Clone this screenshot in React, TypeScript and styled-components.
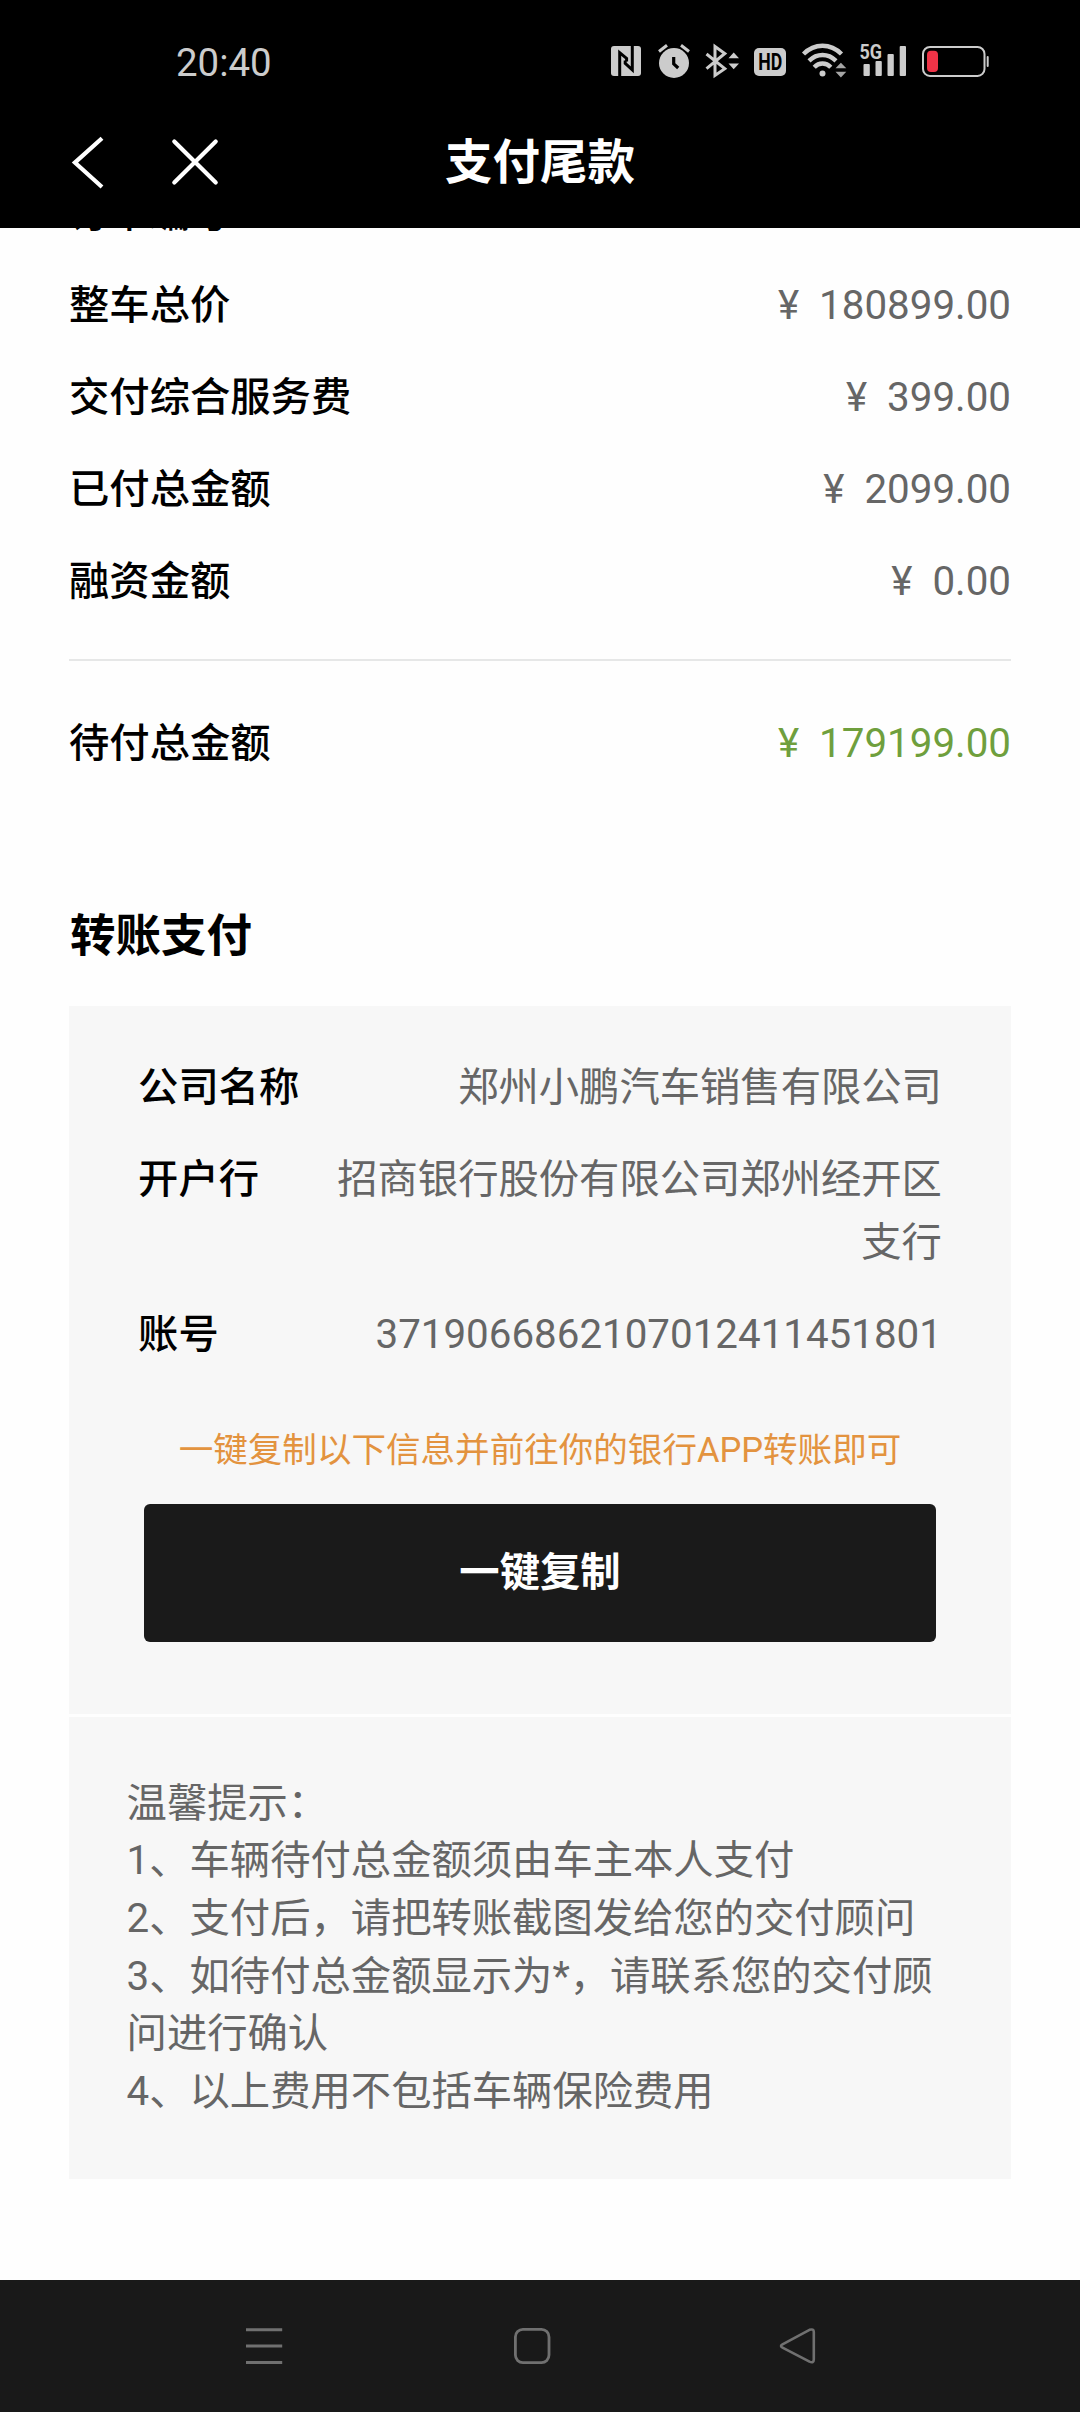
import React from "react";
import styled, { createGlobalStyle, css } from "styled-components";

const GlobalStyle = createGlobalStyle`
  * { box-sizing: border-box; }
  html, body { margin: 0; padding: 0; background: #fff; }
  body { font-family: Roboto, "Noto Sans CJK SC", sans-serif; color: #000; }
`;

const Screen = styled.div`
  width: 1080px;
  height: 2412px;
  display: flex;
  flex-direction: column;
  overflow: hidden;
  background: #fefefe;
`;

const Header = styled.header`
  flex: none;
  height: 228px;
  background: #000;
  color: #fff;
`;

const StatusBar = styled.div`
  height: 100px;
  padding: 22px 91px 0 176px;
  display: flex;
  justify-content: space-between;
  align-items: flex-start;
`;

const Clock = styled.time`
  font-size: 38.4px;
  line-height: 82px;
  color: #ccc;
`;

const StatusIcons = styled.div`
  display: flex;
  margin-top: 18px;
`;

const Glyph = styled.svg<{ $gap?: number }>`
  display: block;
  flex: none;
  overflow: visible;
  margin-left: ${(p) => p.$gap ?? 0}px;
`;

const TitleBar = styled.div`
  height: 128px;
  padding: 0 72px;
  display: grid;
  grid-template-columns: 1fr auto 1fr;
`;

const TitleActions = styled.div`
  display: flex;
  gap: 68px;
  padding-top: 37px;
`;

const Title = styled.h1`
  margin: 0;
  font-size: 47.5px;
  line-height: 126px;
  font-weight: 700;
`;

const Content = styled.main`
  flex: 1;
  min-height: 0;
  overflow: hidden;
  padding: 0 69px;
`;

const Fees = styled.section`
  margin-top: -46.4px;
`;

const Row = styled.div`
  display: flex;
  justify-content: space-between;
  font-size: 40.32px;
  line-height: 63.36px;
  & + & {
    margin-top: 28.8px;
  }
`;

const Label = styled.span`
  flex: none;
  font-weight: 500;
`;

const Value = styled.span<{ $accent?: boolean }>`
  color: #666;
  text-align: right;
  white-space: pre-wrap;
  ${(p) =>
    p.$accent &&
    css`
      color: #6f9f3d;
    `}
`;

const Divider = styled.hr`
  height: 2px;
  margin: 45px 0 51.5px;
  border: 0;
  background: #e6e7e7;
`;

const SectionTitle = styled.h2`
  margin: 128.7px 0 0;
  padding-left: 1px;
  font-size: 45.5px;
  line-height: 66px;
  font-weight: 700;
`;

const Card = styled.section`
  height: 708px;
  margin-top: 35.8px;
  padding: 49.7px 69.12px 0;
  background: #f7f7f7;
`;

const Hint = styled.p`
  margin: 55.3px 0 0;
  font-size: 34.56px;
  line-height: 56px;
  color: #e3933f;
  text-align: center;
  white-space: nowrap;
`;

const CopyButton = styled.button`
  display: block;
  width: 792px;
  height: 138px;
  margin: 26px auto 0;
  padding: 0;
  border: 0;
  border-radius: 6px;
  background: #1a1a1a;
  color: #fff;
  font: 700 40.32px/138px Roboto, "Noto Sans CJK SC", sans-serif;
`;

const Tips = styled.section`
  height: 462px;
  margin-top: 3px;
  padding: 57.8px 57.6px 0;
  background: #f7f7f7;
  color: #666;
  font-size: 40.32px;
  line-height: 57.6px;
`;

const Tip = styled.p`
  margin: 0;
`;

const NavBar = styled.nav`
  flex: none;
  height: 132px;
  padding: 46px 0 0 244px;
  display: flex;
  background: #191919;
`;

const INK = "#ccc";

const NfcIcon = () => (
  <Glyph width="30" height="38" viewBox="611 40 30 38">
    <rect x="611" y="46" width="30" height="30" rx="3" fill={INK} />
    <path
      d="M619.7 77V52.6L626.6 58.4V61.5M632.3 45V69.8L625.2 63.4V60.5"
      fill="none"
      stroke="#000"
      strokeWidth="3"
    />
  </Glyph>
);

const AlarmIcon = () => (
  <Glyph $gap={17} width="32" height="38" viewBox="658 40 32 38">
    <circle cx="674" cy="63" r="15" fill={INK} />
    <path d="M659 51.5L667 45.2M689 51.5L681 45.2" stroke={INK} strokeWidth="3" fill="none" />
    <path d="M673.7 57V63.8L678.2 68" stroke="#000" strokeWidth="3.2" fill="none" />
  </Glyph>
);

const BluetoothIcon = () => (
  <Glyph $gap={15} width="34" height="38" viewBox="705 40 34 38">
    <path
      d="M706.5 54L724.8 68.7L715 75.5V46.5L724.8 53.5L706.5 68.7"
      stroke={INK}
      strokeWidth="3"
      fill="none"
    />
    <path d="M728.5 58.3L733.7 52.4L739 58.3ZM728.5 63.4L733.7 69.2L739 63.4Z" fill={INK} />
  </Glyph>
);

const HdIcon = () => (
  <Glyph $gap={15} width="32" height="38" viewBox="754 40 32 38">
    <rect x="754" y="48" width="32" height="28" rx="5" fill={INK} />
    <text
      x="770.3"
      y="70.3"
      textAnchor="middle"
      textLength="24"
      lengthAdjust="spacingAndGlyphs"
      fontFamily="Roboto, sans-serif"
      fontWeight="700"
      fontSize="23"
      fill="#000"
    >
      HD
    </text>
  </Glyph>
);

const WifiIcon = () => (
  <Glyph $gap={16} width="44" height="38" viewBox="802 40 44 38">
    <circle cx="822.5" cy="73.5" r="3" fill={INK} />
    <path
      d="M803.5 54C814.5 43 830.5 43 841.5 54M809 60.8C817 53 828 53 836 60.8M814.2 67.3C819 62.3 826 62.3 830.8 67.3"
      stroke={INK}
      strokeWidth="4.4"
      fill="none"
    />
    <path d="M835.5 68.3L840.9 62.8L846.3 68.3ZM835.5 71.8L840.9 77.4L846.3 71.8Z" fill="#a5a5a5" />
  </Glyph>
);

const SignalIcon = () => (
  <Glyph $gap={13} width="47" height="38" viewBox="859 40 47 38">
    <g fill={INK}>
      <rect x="863.5" y="64" width="6.3" height="12" rx="1" />
      <rect x="875.5" y="61" width="6.3" height="15" rx="1" />
      <rect x="887.5" y="54" width="6.3" height="22" rx="1" />
      <rect x="899.7" y="46" width="6.3" height="30" rx="1" />
      <text
        x="859.5"
        y="58.8"
        textLength="22.5"
        lengthAdjust="spacingAndGlyphs"
        fontFamily="Roboto, sans-serif"
        fontWeight="700"
        fontSize="20"
      >
        5G
      </text>
    </g>
  </Glyph>
);

const BatteryIcon = () => (
  <Glyph $gap={16} width="67" height="38" viewBox="922 40 67 38">
    <rect x="923" y="46.9" width="61.5" height="29" rx="7" fill="none" stroke={INK} strokeWidth="2" />
    <rect x="927" y="50.8" width="11" height="21.2" rx="4" fill="#ef3347" />
    <rect x="986.7" y="56" width="2" height="11" rx="1" fill={INK} />
  </Glyph>
);

const BackIcon = () => (
  <Glyph width="32" height="50" viewBox="72 137 32 50">
    <path d="M102 138.2L74.9 162.6L102 187" stroke="#fff" strokeWidth="4.2" fill="none" />
  </Glyph>
);

const CloseIcon = () => (
  <Glyph width="46" height="50" viewBox="172 137 46 50">
    <path
      d="M174.3 141.5L215.7 182.5M215.7 141.5L174.3 182.5"
      stroke="#fff"
      strokeWidth="4.2"
      strokeLinecap="round"
      fill="none"
    />
  </Glyph>
);

const MenuIcon = () => (
  <Glyph width="40" height="40" viewBox="244 2326 40 40">
    <path d="M246 2329.7H282.2M246 2346H282.2M246 2362.4H282.2" stroke="#707070" strokeWidth="3" fill="none" />
  </Glyph>
);

const HomeIcon = () => (
  <Glyph $gap={228} width="40" height="40" viewBox="512 2326 40 40">
    <rect x="515.4" y="2329.4" width="33.6" height="33.2" rx="7.5" fill="none" stroke="#707070" strokeWidth="2.8" />
  </Glyph>
);

const ReturnIcon = () => (
  <Glyph $gap={225} width="40" height="40" viewBox="777 2326 40 40">
    <path
      d="M782.5 2344.3L809.5 2329.8Q813.8 2328.5 813.8 2332V2359.5Q813.8 2363.5 809.5 2361.6L782.5 2347.6Q779.5 2346 782.5 2344.3Z"
      fill="none"
      stroke="#707070"
      strokeWidth="2.6"
      strokeLinejoin="round"
    />
  </Glyph>
);

const fees = [
  { label: "订单编号", value: "" },
  { label: "整车总价", value: "¥  180899.00" },
  { label: "交付综合服务费", value: "¥  399.00" },
  { label: "已付总金额", value: "¥  2099.00" },
  { label: "融资金额", value: "¥  0.00" },
];

const account = [
  { label: "公司名称", value: "郑州小鹏汽车销售有限公司" },
  { label: "开户行", value: "招商银行股份有限公司郑州经开区\n支行" },
  { label: "账号", value: "3719066862107012411451801" },
];

const tips = [
  "温馨提示：",
  "1、车辆待付总金额须由车主本人支付",
  "2、支付后，请把转账截图发给您的交付顾问",
  "3、如待付总金额显示为*，请联系您的交付顾问进行确认",
  "4、以上费用不包括车辆保险费用",
];

export default function App() {
  return (
    <>
      <GlobalStyle />
      <Screen lang="zh-CN">
        <Header>
          <StatusBar>
            <Clock>20:40</Clock>
            <StatusIcons>
              <NfcIcon />
              <AlarmIcon />
              <BluetoothIcon />
              <HdIcon />
              <WifiIcon />
              <SignalIcon />
              <BatteryIcon />
            </StatusIcons>
          </StatusBar>
          <TitleBar>
            <TitleActions>
              <BackIcon />
              <CloseIcon />
            </TitleActions>
            <Title>支付尾款</Title>
          </TitleBar>
        </Header>
        <Content>
          <Fees>
            {fees.map((f) => (
              <Row key={f.label}>
                <Label>{f.label}</Label>
                <Value>{f.value}</Value>
              </Row>
            ))}
            <Divider />
            <Row>
              <Label>待付总金额</Label>
              <Value $accent>{"¥  179199.00"}</Value>
            </Row>
          </Fees>
          <SectionTitle>转账支付</SectionTitle>
          <Card>
            {account.map((a) => (
              <Row key={a.label}>
                <Label>{a.label}</Label>
                <Value>{a.value}</Value>
              </Row>
            ))}
            <Hint>一键复制以下信息并前往你的银行APP转账即可</Hint>
            <CopyButton>一键复制</CopyButton>
          </Card>
          <Tips>
            {tips.map((t) => (
              <Tip key={t}>{t}</Tip>
            ))}
          </Tips>
        </Content>
        <NavBar>
          <MenuIcon />
          <HomeIcon />
          <ReturnIcon />
        </NavBar>
      </Screen>
    </>
  );
}
